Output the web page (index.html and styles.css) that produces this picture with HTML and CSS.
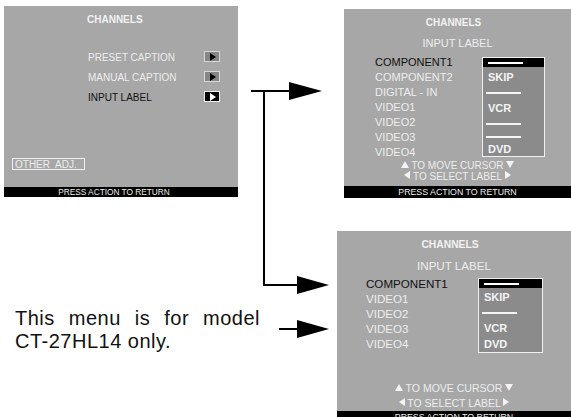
FILE: index.html
```html
<!DOCTYPE html>
<html>
<head>
    <meta charset="UTF-8">
    <title>Channels - Input Label</title>
    <link rel="stylesheet" href="styles.css">
</head>
<body>

<div class="sheet">

    <!-- main channels menu -->
    <div class="panel panel-main">
        <div class="menu">
            <div class="title">CHANNELS</div>
            <ul class="options">
                <li><span>PRESET CAPTION</span><i class="go"></i></li>
                <li><span>MANUAL CAPTION</span><i class="go"></i></li>
                <li class="on"><span>INPUT LABEL</span><i class="go"></i></li>
            </ul>
        </div>
        <div class="other">OTHER&nbsp; ADJ.</div>
        <div class="bar bar-small">PRESS ACTION TO RETURN</div>
    </div>

    <!-- input label, full list -->
    <div class="panel panel-label">
        <div class="title">CHANNELS</div>
        <div class="sub">INPUT LABEL</div>
        <div class="body">
            <ul class="inputs">
                <li class="on">COMPONENT1</li>
                <li>COMPONENT2</li>
                <li>DIGITAL - IN</li>
                <li>VIDEO1</li>
                <li>VIDEO2</li>
                <li>VIDEO3</li>
                <li>VIDEO4</li>
            </ul>
            <div class="labels labels-long">
                <div class="cursor"><b></b></div>
                <div class="name">SKIP</div>
                <div class="blank"><b></b></div>
                <div class="name">VCR</div>
                <div class="blank"><b></b></div>
                <div class="blank"><b></b></div>
                <div class="name">DVD</div>
            </div>
        </div>
        <div class="hints">
            <div><i class="tri up"></i> TO MOVE CURSOR <i class="tri down"></i></div>
            <div><i class="tri left"></i> TO SELECT LABEL <i class="tri right"></i></div>
        </div>
        <div class="bar">PRESS ACTION TO RETURN</div>
    </div>

    <!-- input label, CT-27HL14 -->
    <div class="panel panel-short">
        <div class="title">CHANNELS</div>
        <div class="sub">INPUT LABEL</div>
        <div class="body">
            <ul class="inputs">
                <li class="on">COMPONENT1</li>
                <li>VIDEO1</li>
                <li>VIDEO2</li>
                <li>VIDEO3</li>
                <li>VIDEO4</li>
            </ul>
            <div class="labels labels-short">
                <div class="cursor"><b></b></div>
                <div class="name">SKIP</div>
                <div class="blank"><b></b></div>
                <div class="name">VCR</div>
                <div class="name">DVD</div>
            </div>
        </div>
        <div class="hints">
            <div><i class="tri up"></i> TO MOVE CURSOR <i class="tri down"></i></div>
            <div><i class="tri left"></i> TO SELECT LABEL <i class="tri right"></i></div>
        </div>
        <div class="bar">PRESS ACTION TO RETURN</div>
    </div>

    <p class="note">This menu is for model CT-27HL14 only.</p>

    <!-- connector arrows -->
    <svg class="arrows" width="571" height="417" viewBox="0 0 571 417">
        <g stroke="#000" stroke-width="2" fill="none">
            <line x1="251" y1="91" x2="292" y2="91"/>
            <polyline points="264,91 264,285 300,285"/>
            <line x1="279" y1="329" x2="300" y2="329"/>
        </g>
        <g fill="#000">
            <polygon points="289,82 322,91 289,100"/>
            <polygon points="297,276 329,285 297,294"/>
            <polygon points="297,320 329,329 297,338"/>
        </g>
    </svg>

</div>

</body>
</html>
```

FILE: styles.css
```css
body {
    margin: 0;
    background: #fff;
    font-family: "Liberation Sans", Arial, sans-serif;
}

.sheet {
    position: relative;
    width: 571px;
    height: 417px;
    overflow: hidden;
}

ul {
    list-style: none;
    margin: 0;
    padding: 0;
}

.panel {
    position: absolute;
    display: flex;
    flex-direction: column;
    background: #a7a7a7;
    color: #ededed;
}

.panel-main {
    left: 4px;
    top: 6px;
    width: 234px;
    height: 191px;
}

.panel-label {
    left: 344px;
    top: 9px;
    width: 227px;
    height: 188px;
}

.panel-short {
    left: 337px;
    top: 231px;
    width: 234px;
    height: 192px;
}

.title {
    font-weight: bold;
    font-size: 10px;
    line-height: 12px;
    margin-top: 8px;
    color: #f2f2f2;
}

/* main menu */

.menu {
    padding-left: 83px;
}

.options {
    margin-top: 21px;
    width: 133px;
}

.options li {
    display: flex;
    justify-content: space-between;
    align-items: center;
    height: 20px;
    font-size: 10px;
    padding-left: 1px;
}

.options li.on {
    color: #111;
}

.go {
    display: flex;
    align-items: center;
    justify-content: center;
    width: 14px;
    height: 9px;
    border: 1px solid #d8d8d8;
    background: #858585;
    margin-top: -1px;
}

.go::after {
    content: "";
    border-left: 6px solid #000;
    border-top: 4px solid transparent;
    border-bottom: 4px solid transparent;
    margin-left: 2px;
}

.on .go {
    background: #000;
    border-color: #f0f0f0;
}

.on .go::after {
    border-left-color: #fff;
}

.other {
    align-self: flex-start;
    margin: auto 0 17px 8px;
    border: 1px solid #f0f0f0;
    width: 69px;
    height: 10px;
    line-height: 11px;
    font-size: 10px;
    padding-left: 2px;
    white-space: nowrap;
}

.bar {
    background: #000;
    color: #ededed;
    text-align: center;
    height: 12px;
    line-height: 12px;
    font-size: 8.8px;
    flex: none;
}

.bar-small {
    height: 10px;
    line-height: 11px;
    font-size: 8.3px;
    padding-right: 14px;
}

/* input label screens */

.panel-label .title,
.panel-short .title {
    text-align: center;
    padding-right: 8px;
}

.sub {
    text-align: center;
    font-size: 11px;
    line-height: 14px;
    margin-top: 7px;
}

.body {
    display: flex;
    align-items: flex-start;
    margin-top: 5px;
}

.inputs {
    width: 107px;
    padding-left: 31px;
    flex: none;
}

.inputs li {
    height: 15px;
    line-height: 15px;
    font-size: 11px;
    white-space: nowrap;
}

.inputs li.on {
    color: #111;
}

.labels {
    display: grid;
    width: 61px;
    margin-top: 2px;
    border: 1px solid #f0f0f0;
    background: #8b8b8b;
}

.labels-long {
    grid-template-rows: 9px 19px 14px 16px 15px 11px 14px;
}

.labels-short {
    grid-template-rows: 9px 18px 14px 16px 16px;
}

.labels .cursor {
    background: #000;
    display: flex;
    align-items: center;
    padding-left: 5px;
}

.cursor b {
    display: block;
    width: 35px;
    height: 2px;
    background: #fff;
}

.labels .name {
    font-weight: bold;
    font-size: 11px;
    color: #f4f4f4;
    display: flex;
    align-items: center;
    padding-left: 5px;
}

.labels .blank {
    display: flex;
    align-items: center;
    padding-left: 3px;
}

.blank b {
    display: block;
    width: 35px;
    height: 2px;
    background: #f4f4f4;
}

.hints {
    margin-top: auto;
    margin-bottom: 4px;
    text-align: center;
    font-size: 10px;
    line-height: 11px;
    white-space: nowrap;
}

.tri {
    display: inline-block;
    width: 0;
    height: 0;
    vertical-align: 1px;
}

.tri.up {
    border-left: 4px solid transparent;
    border-right: 4px solid transparent;
    border-bottom: 7px solid #f4f4f4;
}

.tri.down {
    border-left: 4px solid transparent;
    border-right: 4px solid transparent;
    border-top: 7px solid #f4f4f4;
}

.tri.left {
    border-top: 4px solid transparent;
    border-bottom: 4px solid transparent;
    border-right: 6px solid #f4f4f4;
}

.tri.right {
    border-top: 4px solid transparent;
    border-bottom: 4px solid transparent;
    border-left: 6px solid #f4f4f4;
}

/* CT-27HL14 version is drawn a touch larger */

.panel-short .title {
    font-size: 10.3px;
}

.panel-short .sub {
    font-size: 11.6px;
    margin-top: 8px;
}

.panel-short .body {
    margin-top: 3px;
}

.panel-short .inputs {
    width: 112px;
    padding-left: 29px;
}

.panel-short .inputs li {
    font-size: 11.6px;
}

.panel-short .labels {
    width: 63px;
}

.panel-short .hints {
    line-height: 15px;
    margin-bottom: 0;
    font-size: 10.5px;
}

/* side note */

.note {
    position: absolute;
    left: 15px;
    top: 307px;
    width: 245px;
    margin: 0;
    font-size: 20px;
    line-height: 23px;
    letter-spacing: 0.5px;
    text-align: justify;
    color: #111;
}

.arrows {
    position: absolute;
    left: 0;
    top: 0;
}
```
